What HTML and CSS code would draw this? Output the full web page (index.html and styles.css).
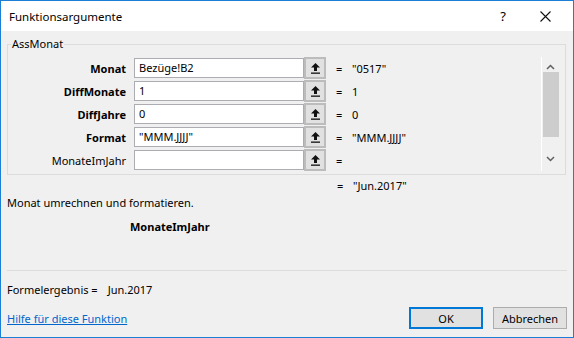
FILE: index.html
```html
<!DOCTYPE html>
<html lang="de">
<head>
  <meta charset="UTF-8" />
  <title>Funktionsargumente</title>
  <link rel="stylesheet" href="styles.css">
</head>
<body>
  <div class="dialog">
    <div class="titlebar">
      <span class="title">Funktionsargumente</span>
      <span class="help">?</span>
      <span class="close">
        <svg width="11" height="11" viewBox="0 0 11 11"><path d="M0.5 0.5 L10.5 10.5 M10.5 0.5 L0.5 10.5" stroke="#111" stroke-width="1.1" fill="none"/></svg>
      </span>
    </div>

    <div class="content">
      <fieldset class="group">
        <legend>AssMonat</legend>
        <div class="args">
          <div class="arg-list">
            <div class="arg">
              <label class="bold">Monat</label>
              <div class="field">Bezüge!B2</div>
              <button class="ref"><svg width="9" height="11" viewBox="0 0 9 11"><path d="M4.5 0 L9 4.5 L6 4.5 L6 8 L3 8 L3 4.5 L0 4.5 Z" fill="#111"/><rect x="0" y="9.5" width="9" height="1.3" fill="#111"/></svg></button>
              <span class="eq">=</span>
              <span class="value">"0517"</span>
            </div>
            <div class="arg">
              <label class="bold">DiffMonate</label>
              <div class="field">1</div>
              <button class="ref"><svg width="9" height="11" viewBox="0 0 9 11"><path d="M4.5 0 L9 4.5 L6 4.5 L6 8 L3 8 L3 4.5 L0 4.5 Z" fill="#111"/><rect x="0" y="9.5" width="9" height="1.3" fill="#111"/></svg></button>
              <span class="eq">=</span>
              <span class="value">1</span>
            </div>
            <div class="arg">
              <label class="bold">DiffJahre</label>
              <div class="field">0</div>
              <button class="ref"><svg width="9" height="11" viewBox="0 0 9 11"><path d="M4.5 0 L9 4.5 L6 4.5 L6 8 L3 8 L3 4.5 L0 4.5 Z" fill="#111"/><rect x="0" y="9.5" width="9" height="1.3" fill="#111"/></svg></button>
              <span class="eq">=</span>
              <span class="value">0</span>
            </div>
            <div class="arg">
              <label class="bold">Format</label>
              <div class="field">"MMM.JJJJ"</div>
              <button class="ref"><svg width="9" height="11" viewBox="0 0 9 11"><path d="M4.5 0 L9 4.5 L6 4.5 L6 8 L3 8 L3 4.5 L0 4.5 Z" fill="#111"/><rect x="0" y="9.5" width="9" height="1.3" fill="#111"/></svg></button>
              <span class="eq">=</span>
              <span class="value">"MMM.JJJJ"</span>
            </div>
            <div class="arg">
              <label>MonateImJahr</label>
              <div class="field"></div>
              <button class="ref"><svg width="9" height="11" viewBox="0 0 9 11"><path d="M4.5 0 L9 4.5 L6 4.5 L6 8 L3 8 L3 4.5 L0 4.5 Z" fill="#111"/><rect x="0" y="9.5" width="9" height="1.3" fill="#111"/></svg></button>
              <span class="eq">=</span>
              <span class="value"></span>
            </div>
          </div>
          <div class="scrollbar">
            <svg class="arrow" width="9" height="6" viewBox="0 0 9 6"><path d="M1 5 L4.5 1.5 L8 5" stroke="#606060" stroke-width="1.5" fill="none"/></svg>
            <div class="thumb"></div>
            <svg class="arrow" width="9" height="6" viewBox="0 0 9 6"><path d="M1 1 L4.5 4.5 L8 1" stroke="#606060" stroke-width="1.5" fill="none"/></svg>
          </div>
        </div>
      </fieldset>

      <div class="result">
        <span class="eq">=</span>
        <span class="value">"Jun.2017"</span>
      </div>

      <p class="description">Monat umrechnen und formatieren.</p>
      <p class="arg-help">MonateImJahr</p>

      <hr class="separator">

      <p class="formula">Formelergebnis =<span class="formula-value">Jun.2017</span></p>

      <div class="footer">
        <a href="#" class="help-link">Hilfe für diese Funktion</a>
        <div class="buttons">
          <button class="btn btn-default">OK</button>
          <button class="btn">Abbrechen</button>
        </div>
      </div>
    </div>
  </div>
</body>
</html>
```

FILE: styles.css
```css
:root {
  --accent: #1c7fd6;
  --face: #f0f0f0;
  --line: #dcdcdc;
  --text: #000;
}

* {
  box-sizing: border-box;
}

body {
  margin: 0;
  font-family: 'Segoe UI', 'Noto Sans', sans-serif;
  font-size: 11px;
  color: var(--text);
}

.dialog {
  width: 574px;
  height: 338px;
  border: 1px solid var(--accent);
  background: var(--face);
  display: flex;
  flex-direction: column;
}

/* title bar */
.titlebar {
  height: 30px;
  background: #fff;
  display: flex;
  align-items: center;
  padding-left: 8px;
}

.title {
  flex: 1;
  font-size: 11.5px;
}

.help {
  width: 20px;
  text-align: center;
  font-size: 13px;
  margin-right: 22px;
}

.close {
  width: 20px;
  display: flex;
  justify-content: center;
  margin-right: 18px;
}

.content {
  flex: 1;
  padding-top: 6px;
}

/* argument group */
.group {
  margin: 0 7px 0 6px;
  padding: 6px 0 3px 0;
  border: 1px solid var(--line);
  min-width: 0;
}

.group legend {
  padding: 0 1px;
  margin-left: 3px;
  line-height: 14px;
}

.args {
  display: flex;
}

.arg-list {
  flex: 1;
  display: flex;
  flex-direction: column;
  gap: 1px;
}

.arg {
  height: 22px;
  display: flex;
  align-items: center;
}

.arg label {
  width: 118px;
  text-align: right;
  margin-right: 8px;
}

.bold {
  font-weight: bold;
}

.field {
  width: 170px;
  height: 20px;
  background: #fff;
  border: 1px solid #abadb3;
  padding: 0 4px;
  line-height: 18px;
  white-space: nowrap;
}

.ref {
  width: 22px;
  height: 22px;
  padding: 0;
  border: 2px solid #bcbcbc;
  background: #e1e1e1;
  display: flex;
  align-items: center;
  justify-content: center;
}

.eq {
  margin-left: 10px;
  width: 16px;
}

.value {
  white-space: nowrap;
}

.scrollbar {
  width: 17px;
  margin-right: 7px;
  border-left: 1px solid #fff;
  display: flex;
  flex-direction: column;
  align-items: center;
  padding: 7px 0 4px;
}

.thumb {
  width: 16px;
  margin-left: 1px;
  height: 65px;
  background: #cdcdcd;
  margin-top: 2px;
  margin-bottom: 19px;
}

/* result area */
.result {
  margin: 4px 0 0 326px;
  display: flex;
  line-height: 14px;
}

.description {
  margin: 3px 0 0 6px;
  line-height: 14px;
}

.arg-help {
  margin: 10px 0 0 129px;
  line-height: 14px;
  font-weight: bold;
}

.separator {
  margin: 36px 6px 0 6px;
  border: 0;
  border-top: 1px solid var(--line);
  height: 0;
}

.formula {
  margin: 12px 0 0 6px;
  line-height: 14px;
}

.formula-value {
  margin-left: 10px;
}

.footer {
  margin: 10px 6px 0 6px;
  display: flex;
  align-items: center;
  justify-content: space-between;
}

.help-link {
  color: #0066cc;
  text-decoration: underline;
}

.buttons {
  display: flex;
  gap: 10px;
}

.btn {
  width: 74px;
  height: 22px;
  font-family: inherit;
  font-size: 11px;
  background: #e1e1e1;
  border: 1px solid #adadad;
  padding: 0;
}

.btn-default {
  border: 2px solid #0078d7;
}
```
